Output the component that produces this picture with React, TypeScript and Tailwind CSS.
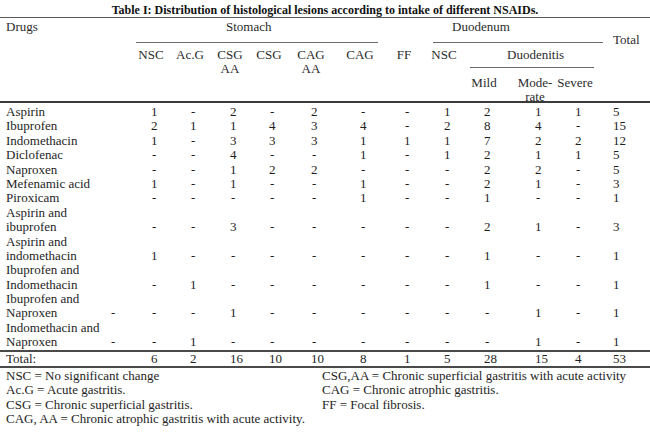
import * as React from 'react'

type Row = { name: string; vals?: string[]; lead?: boolean }

const ROWS: Row[] = [
  { name: 'Aspirin', vals: ['1', '-', '2', '-', '2', '-', '-', '1', '2', '1', '1', '5'] },
  { name: 'Ibuprofen', vals: ['2', '1', '1', '4', '3', '4', '-', '2', '8', '4', '-', '15'] },
  { name: 'Indomethacin', vals: ['1', '-', '3', '3', '3', '1', '1', '1', '7', '2', '2', '12'] },
  { name: 'Diclofenac', vals: ['-', '-', '4', '-', '-', '1', '-', '1', '2', '1', '1', '5'] },
  { name: 'Naproxen', vals: ['-', '-', '1', '2', '2', '-', '-', '-', '2', '2', '-', '5'] },
  { name: 'Mefenamic acid', vals: ['1', '-', '1', '-', '-', '1', '-', '-', '2', '1', '-', '3'] },
  { name: 'Piroxicam', vals: ['-', '-', '-', '-', '-', '1', '-', '-', '1', '-', '-', '1'] },
  { name: 'Aspirin and' },
  { name: 'ibuprofen', vals: ['-', '-', '3', '-', '-', '-', '-', '-', '2', '1', '-', '3'] },
  { name: 'Aspirin and' },
  { name: 'indomethacin', vals: ['1', '-', '-', '-', '-', '-', '-', '-', '1', '-', '-', '1'] },
  { name: 'Ibuprofen and' },
  { name: 'Indomethacin', vals: ['-', '1', '-', '-', '-', '-', '-', '-', '1', '-', '-', '1'] },
  { name: 'Ibuprofen and' },
  { name: 'Naproxen', lead: true, vals: ['-', '-', '1', '-', '-', '-', '-', '-', '-', '1', '-', '1'] },
  { name: 'Indomethacin and' },
  { name: 'Naproxen', lead: true, vals: ['-', '1', '-', '-', '-', '-', '-', '-', '-', '1', '-', '1'] },
]

const TOTALS = ['6', '2', '16', '10', '10', '8', '1', '5', '28', '15', '4', '53']

const COLS =
  'grid grid-cols-[151px_39px_40px_39px_42px_49px_44px_40px_40px_51px_40px_38px_37px]'

function Val({ v }: { v: string }) {
  return (
    <div>
      <span className="inline-block min-w-[6.5px] text-center">{v}</span>
    </div>
  )
}

// header label centred on the column's left edge (where the digits start)
function Head({ children, className = '' }: { children: React.ReactNode; className?: string }) {
  return (
    <div className={`flex w-0 justify-center whitespace-nowrap text-center ${className}`}>
      <div>{children}</div>
    </div>
  )
}

export default function App() {
  return (
    <div className="h-[433px] w-[650px] overflow-hidden bg-white font-['Liberation_Serif','Times_New_Roman',serif] text-[13px] text-[#1e1e1e]">
      <div className="h-[17px] pt-[3px] text-center text-[12px] font-bold leading-[14px] text-[#111]">
        Table I: Distribution of histological lesions according to intake of different NSAIDs.
      </div>
      <div className="h-px bg-[#5a5a5a]" />

      <div className={`${COLS} grid-rows-[18px_12px_28px_25px] leading-[14px] text-[#2b2b2b]`}>
        <div className="col-start-1 row-start-1 pl-[6px] leading-[18px]">Drugs</div>
        <div className="col-span-6 col-start-2 row-start-1 -ml-[15px] mr-[26px] pl-[90px] leading-[18px]">
          Stomach
        </div>
        <div className="col-span-6 col-start-2 row-start-2 -ml-[15px] mr-[26px] h-px self-center bg-[#6a6a6a]" />
        <div className="col-span-4 col-start-9 row-start-1 -ml-[11px] mr-[10px] pl-[19px] leading-[18px]">
          Duodenum
        </div>
        <div className="col-span-4 col-start-9 row-start-2 -ml-[11px] mr-[10px] h-px self-center bg-[#6a6a6a]" />
        <div className="col-start-13 row-start-2 -mt-[2px] leading-[12px]">Total</div>

        <Head className="col-start-2 row-start-3">NSC</Head>
        <Head className="col-start-3 row-start-3">Ac.G</Head>
        <Head className="col-start-4 row-start-3">
          CSG
          <br />
          AA
        </Head>
        <Head className="col-start-5 row-start-3">CSG</Head>
        <Head className="col-start-6 row-start-3">
          CAG
          <br />
          AA
        </Head>
        <Head className="col-start-7 row-start-3">CAG</Head>
        <Head className="col-start-8 row-start-3">FF</Head>
        <Head className="col-start-9 row-start-3">NSC</Head>
        <div className="col-span-3 col-start-10 row-start-3 -ml-[14px] mr-[19px]">
          <div className="pl-[37px]">Duodenitis</div>
          <div className="mt-[5px] h-px bg-[#6a6a6a]" />
        </div>

        <Head className="col-start-10 row-start-4">Mild</Head>
        <Head className="col-start-11 row-start-4">
          Mode-
          <br />
          rate
        </Head>
        <Head className="col-start-12 row-start-4">Severe</Head>
      </div>
      <div className="h-[2px] bg-[#3a3a3a]" />

      <div className="pt-[2px]">
        {ROWS.map((r, i) => (
          <div key={i} className={`${COLS} h-[14.4px] leading-[14.4px]`}>
            <div className="flex pl-[6px]">
              {r.lead ? (
                <>
                  <span className="w-[104px]">{r.name}</span>
                  <span className="inline-block min-w-[6.5px] text-center">-</span>
                </>
              ) : (
                <span>{r.name}</span>
              )}
            </div>
            {r.vals?.map((v, j) => <Val key={j} v={v} />)}
          </div>
        ))}
      </div>

      <div className="h-[2px] bg-[#4a4a4a]" />
      <div className={`${COLS} h-[14px] leading-[14px]`}>
        <div className="pl-[6px]">Total:</div>
        {TOTALS.map((v, j) => (
          <Val key={j} v={v} />
        ))}
      </div>
      <div className="h-[2px] bg-[#4a4a4a]" />

      <div className="grid grid-cols-[316px_1fr] pl-[6px] pt-[1px] leading-[14.5px]">
        <div>NSC = No significant change</div>
        <div>CSG,AA = Chronic superficial gastritis with acute activity</div>
        <div>Ac.G = Acute gastritis.</div>
        <div>CAG = Chronic atrophic gastritis.</div>
        <div>CSG = Chronic superficial gastritis.</div>
        <div>FF = Focal fibrosis.</div>
        <div className="col-span-2">CAG, AA = Chronic atrophic gastritis with acute activity.</div>
      </div>
    </div>
  )
}
